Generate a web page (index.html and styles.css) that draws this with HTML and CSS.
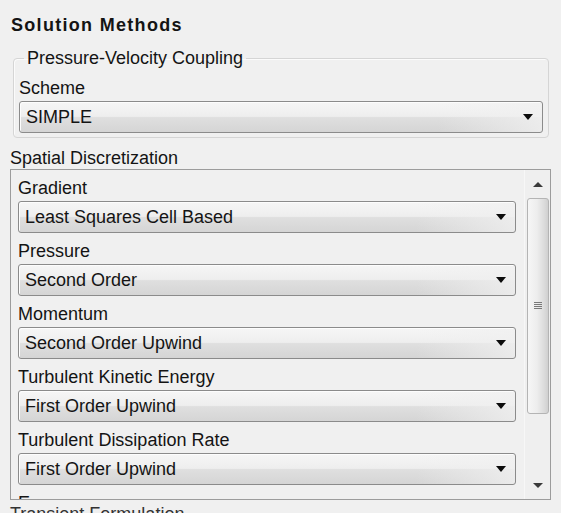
FILE: index.html
```html
<!DOCTYPE html>
<html>

<head>
    <meta name="viewport" content="width=device-width, initial-scale=1">
    <title>Solution Methods</title>
    <link rel="stylesheet" href="styles.css">
</head>

<body>
    <div class="panel">
        <h1 class="title">Solution Methods</h1>

        <fieldset class="group">
            <legend>Pressure-Velocity Coupling</legend>
            <div class="label">Scheme</div>
            <div class="combo">
                <span>SIMPLE</span>
                <i class="arrow"></i>
            </div>
        </fieldset>

        <div class="label section">Spatial Discretization</div>
        <div class="scrollbox">
            <div class="list">
                <div class="label">Gradient</div>
                <div class="combo"><span>Least Squares Cell Based</span><i class="arrow"></i></div>
                <div class="label">Pressure</div>
                <div class="combo"><span>Second Order</span><i class="arrow"></i></div>
                <div class="label">Momentum</div>
                <div class="combo"><span>Second Order Upwind</span><i class="arrow"></i></div>
                <div class="label">Turbulent Kinetic Energy</div>
                <div class="combo"><span>First Order Upwind</span><i class="arrow"></i></div>
                <div class="label">Turbulent Dissipation Rate</div>
                <div class="combo"><span>First Order Upwind</span><i class="arrow"></i></div>
                <div class="label">Energy</div>
            </div>
            <div class="scrollbar">
                <div class="sb-btn"><i class="sb-up"></i></div>
                <div class="thumb"><i class="grip"></i></div>
                <div class="track"></div>
                <div class="sb-btn"><i class="sb-down"></i></div>
            </div>
        </div>

        <div class="label footer">Transient Formulation</div>
    </div>
</body>

</html>
```

FILE: styles.css
```css
body {
    margin: 0;
    background: #f0f0f0;
    font-family: 'Liberation Sans', Arial, sans-serif;
    font-size: 18px;
    color: #141414;
    overflow: hidden;
    height: 513px;
}

.panel {
    padding: 14px 10px 0 10px;
}

.title {
    margin: 0 0 11px 1px;
    font-size: 18px;
    line-height: 22px;
    font-weight: bold;
    letter-spacing: 1.3px;
}

.label {
    line-height: 22px;
    height: 22px;
    margin-bottom: 2px;
    white-space: nowrap;
}

.group {
    margin: 0 2px 0 3px;
    padding: 0 5px 4px 5px;
    border: 1px solid #d5d5d5;
    border-radius: 4px;
    box-shadow: inset 1px 1px 0 #fbfbfb;
}

.group legend {
    padding: 0 3px;
    margin-left: 5px;
    line-height: 22px;
}

.group .label {
    margin-top: 8px;
}

.group .combo {
    margin-bottom: 0;
}

.section {
    margin-top: 9px;
    margin-bottom: 0;
}

.footer {
    margin-top: 3px;
    color: #333;
}

.combo {
    display: flex;
    align-items: center;
    justify-content: space-between;
    height: 30px;
    padding: 0 9px 0 6px;
    border: 1px solid #8b8b8b;
    border-radius: 3px;
    background: linear-gradient(90deg, rgba(240, 240, 240, 0) 80%, rgba(240, 240, 240, 0.8) 100%),
        linear-gradient(180deg, #f6f6f6 0%, #eeeeee 48%, #dfdfdf 52%, #d5d5d5 100%);
    box-shadow: inset 1px 1px 0 #fdfdfd;
    margin-bottom: 7px;
    white-space: nowrap;
}

.arrow {
    width: 0;
    height: 0;
    border-left: 5px solid transparent;
    border-right: 5px solid transparent;
    border-top: 6px solid #0c0c0c;
}

.scrollbox {
    display: flex;
    height: 329px;
    border: 1px solid #9c9c9c;
    overflow: hidden;
}

.list {
    flex: 1;
    padding: 7px 8px 0 7px;
}

.scrollbar {
    width: 25px;
    display: flex;
    flex-direction: column;
    align-items: center;
    background: #efefef;
    border-left: 1px solid #f7f7f7;
}

.sb-btn {
    height: 28px;
    width: 100%;
    display: flex;
    align-items: center;
    justify-content: center;
}

.sb-up {
    width: 0;
    height: 0;
    border-left: 5px solid transparent;
    border-right: 5px solid transparent;
    border-bottom: 5px solid #3a3a3a;
}

.sb-down {
    width: 0;
    height: 0;
    border-left: 5px solid transparent;
    border-right: 5px solid transparent;
    border-top: 5px solid #3a3a3a;
}

.thumb {
    width: 20px;
    height: 214px;
    border: 1px solid #b4b4b4;
    border-radius: 3px;
    background: linear-gradient(90deg, #f6f6f6 0%, #ededed 45%, #d9d9d9 85%, #cfcfcf 100%);
    display: flex;
    align-items: center;
    justify-content: center;
}

.grip {
    width: 8px;
    height: 8px;
    background: repeating-linear-gradient(180deg, #7a7a7a 0 1px, transparent 1px 2px);
}

.track {
    flex: 1;
}
```
